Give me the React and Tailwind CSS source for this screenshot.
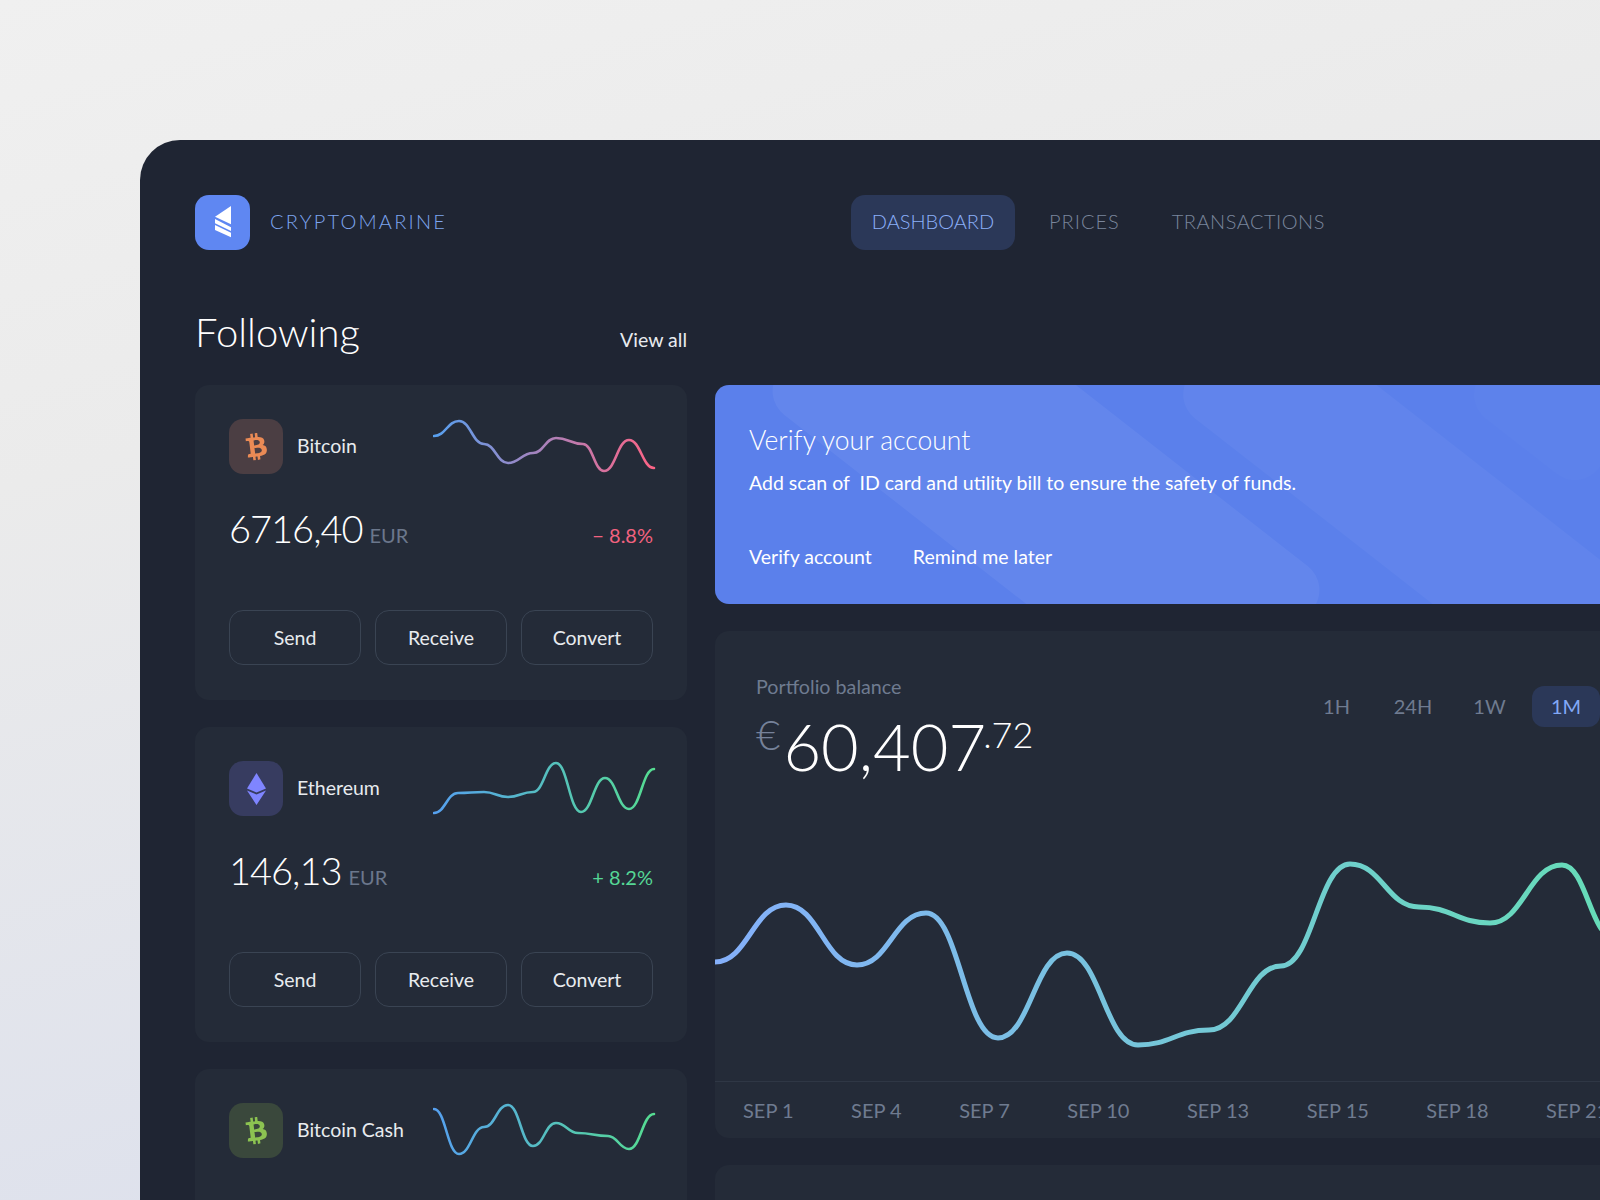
import { FaBtc } from "react-icons/fa";

function smooth(pts) {
  let d = `M${pts[0][0]} ${pts[0][1]}`;
  for (let i = 1; i < pts.length; i++) {
    const [x0, y0] = pts[i - 1];
    const [x1, y1] = pts[i];
    const k = (x1 - x0) * 0.46;
    d += ` C${x0 + k} ${y0} ${x1 - k} ${y1} ${x1} ${y1}`;
  }
  return d;
}

const coins = [
  {
    name: "Bitcoin",
    value: "6716,40",
    change: "− 8.8%",
    changeCls: "text-[#f2627f]",
    iconBg: "bg-[#4b3e43]",
    icon: <FaBtc className="text-[#ea8a55] text-[27px] -rotate-[7deg]" />,
    from: "#56a0f0",
    to: "#ff6384",
    pts: [[1, 21], [26, 6], [51, 29], [75, 48], [100, 38], [123, 23], [150, 29], [171, 56], [196, 25], [221, 53]],
  },
  {
    name: "Ethereum",
    value: "146,13",
    change: "+ 8.2%",
    changeCls: "text-[#55d695]",
    iconBg: "bg-[#373c60]",
    icon: (
      <svg width="19" height="32" viewBox="0 0 19 32">
        <path d="M9.5 0 L19 15.5 L9.5 19.5 L0 15.5 Z" fill="#7f85ff" />
        <path d="M0 17.5 L9.5 21.5 L19 17.5 L9.5 32 Z" fill="#7f85ff" />
      </svg>
    ),
    from: "#56a0f0",
    to: "#55dd90",
    pts: [[1, 56], [25, 36], [51, 35], [75, 40], [100, 35], [123, 6], [148, 55], [172, 21], [196, 52], [221, 12]],
  },
  {
    name: "Bitcoin Cash",
    value: "1946,10",
    change: "+ 2.1%",
    changeCls: "text-[#55d695]",
    iconBg: "bg-[#3a483c]",
    icon: <FaBtc className="text-[#8cc351] text-[27px] -rotate-[7deg]" />,
    from: "#56a0f0",
    to: "#55dd90",
    pts: [[1, 10], [26, 55], [51, 28], [75, 6], [100, 47], [123, 24], [145, 34], [175, 37], [196, 50], [221, 15]],
  },
];

function Spark({ id, pts, from, to }) {
  return (
    <svg width="224" height="60" viewBox="0 0 224 60" fill="none" className="shrink-0">
      <defs>
        <linearGradient id={id} gradientUnits="userSpaceOnUse" x1="0" y1="0" x2="224" y2="0">
          <stop offset="0" stopColor={from} />
          <stop offset="1" stopColor={to} />
        </linearGradient>
      </defs>
      <path d={smooth(pts)} stroke={`url(#${id})`} strokeWidth="2.6" strokeLinecap="round" />
    </svg>
  );
}

function CoinCard({ coin, idx }) {
  return (
    <div className="h-[315px] shrink-0 rounded-[14px] bg-[#242b38] px-[34px] pt-[34px]">
      <div className="flex items-center h-[55px]">
        <div className={`w-[54px] h-[55px] rounded-[14px] flex items-center justify-center shrink-0 ${coin.iconBg}`}>
          {coin.icon}
        </div>
        <span className="ml-[14px] pb-[1px] text-[19.5px] text-[#e8ebef]">{coin.name}</span>
        <div className="ml-auto mr-[-4px] mb-[4px]">
          <Spark id={`spark${idx}`} pts={coin.pts} from={coin.from} to={coin.to} />
        </div>
      </div>
      <div className="flex items-baseline mt-[26px] h-[50px]">
        <span className="text-[38px] tracking-[-1px] font-light text-white">{coin.value}</span>
        <span className="ml-[7px] text-[20px] text-[#6b778c]">EUR</span>
        <span className={`ml-auto text-[20px] ${coin.changeCls}`}>{coin.change}</span>
      </div>
      <div className="flex gap-[14px] mt-[60px]">
        {["Send", "Receive", "Convert"].map((b) => (
          <button key={b} className="flex-1 h-[55px] rounded-[14px] border border-[#3a4453] text-[19.5px] text-[#e8ebef]">
            {b}
          </button>
        ))}
      </div>
    </div>
  );
}

const chartPts = [[0, 106], [71, 49], [142, 109], [211, 57], [283, 182], [352, 97], [423, 189], [494, 174], [566, 110], [635, 8], [704, 51], [775, 67], [847, 9], [900, 82]];
const days = ["SEP 1", "SEP 4", "SEP 7", "SEP 10", "SEP 13", "SEP 15", "SEP 18", "SEP 21"];

export default function App() {
  return (
    <div className="w-[1600px] h-[1200px] overflow-hidden bg-[linear-gradient(165deg,#f0f0f0_0%,#ebebeb_30%,#d8dded_100%)] pt-[140px] pl-[140px] font-['Lato',sans-serif]">
      <div className="w-[1500px] h-[1100px] rounded-tl-[40px] bg-[#1f2533] pl-[55px] pt-[55px]">
        <header className="flex items-center h-[55px]">
          <div className="w-[55px] h-[55px] rounded-[14px] bg-[#5f87f2] flex items-center justify-center">
            <svg width="16" height="32" viewBox="0 0 16 32" fill="#fff" className="mb-[2px]">
              <path d="M16 0 L0 10.7 L16 18.3 Z" />
              <path d="M0 13 L16 21.3 V25 L0 17.3 Z" />
              <path d="M0 19 L16 26.7 V31.3 L0 24 Z" />
            </svg>
          </div>
          <span className="ml-5 pb-[3px] w-[180px] text-[20px] font-light leading-none tracking-[2.2px] text-[#7ea5f0]">CRYPTOMARINE</span>
          <nav className="ml-[401px] flex items-center text-[20px] font-light">
            <a className="h-[55px] w-[164px] pb-[3px] rounded-[14px] bg-[#2b3858] flex items-center justify-center text-[#8cb0fa]">DASHBOARD</a>
            <a className="ml-[34px] pb-[3px] text-[#7a869c] tracking-[1px]">PRICES</a>
            <a className="ml-[52px] pb-[3px] text-[#7a869c] tracking-[0.5px]">TRANSACTIONS</a>
          </nav>
        </header>

        <div className="flex gap-[28px] mt-[50px]">
          <div className="w-[492px] shrink-0">
            <div className="flex items-baseline justify-between h-[85px] pt-[2px]">
              <h1 className="text-[40px] font-light text-white">Following</h1>
              <a className="text-[19.5px] text-[#e8ebef]">View all</a>
            </div>
            <div className="flex flex-col gap-[27px]">
              {coins.map((c, i) => <CoinCard key={c.name} coin={c} idx={i} />)}
            </div>
          </div>

          <div className="flex-1 min-w-0 pt-[85px] flex flex-col gap-[27px]">
            <div className="relative h-[219px] shrink-0 overflow-hidden rounded-[14px] bg-[#5b80eb] pl-[34px] pt-[37px] text-white">
              <div className="absolute left-[48px] top-[4px] w-[566px] h-[203px] rounded-[30px] bg-white/[0.05] rotate-[38deg]" />
              <div className="absolute left-[435px] top-[76px] w-[600px] h-[138px] rounded-[30px] bg-white/[0.035] rotate-[38deg]" />
              <div className="absolute left-[774px] top-[-64px] w-[150px] h-[140px] rounded-[30px] bg-white/[0.015] rotate-[38deg]" />
              <div className="relative">
                <h2 className="text-[26.5px] font-light leading-[36px]">Verify your account</h2>
                <p className="mt-[11px] text-[19.5px] leading-[28px]">Add scan of&nbsp; ID card and utility bill to ensure the safety of funds.</p>
                <div className="mt-[46px] flex gap-[41px] text-[19.5px] leading-[28px]">
                  <a>Verify account</a>
                  <a>Remind me later</a>
                </div>
              </div>
            </div>

            <div className="h-[507px] shrink-0 rounded-[14px] bg-[#242b38] flex flex-col overflow-hidden">
              <div className="flex justify-between h-[225px] pl-[41px] pr-[40px] pt-[42px]">
                <div>
                  <div className="text-[19.7px] leading-[28px] text-[#6f7b90]">Portfolio balance</div>
                  <div className="flex items-start mt-[7px] text-white font-light">
                    <span className="text-[42px] text-[#76829a] leading-[52px] mr-[3px]">€</span>
                    <span className="text-[65px] leading-[76px]">60,407</span>
                    <span className="text-[36px] leading-[52px] ml-[-3px]">.72</span>
                  </div>
                </div>
                <div className="flex items-center h-[41px] mt-[13px] gap-[8.5px] text-[20px] text-[#6f7b90]">
                  <span className="w-[68px] pb-[2px] text-center">1H</span>
                  <span className="w-[68px] pb-[2px] text-center">24H</span>
                  <span className="w-[68px] pb-[2px] text-center">1W</span>
                  <span className="w-[68px] h-[41px] pb-[2px] rounded-[12px] bg-[#2b3858] text-[#82a8f6] flex items-center justify-center">1M</span>
                </div>
              </div>
              <svg width="885" height="225" viewBox="0 0 885 225" fill="none" className="shrink-0">
                <defs>
                  <linearGradient id="balance" gradientUnits="userSpaceOnUse" x1="0" y1="0" x2="885" y2="0">
                    <stop offset="0" stopColor="#85b0fb" />
                    <stop offset="1" stopColor="#66dcb8" />
                  </linearGradient>
                </defs>
                <path d={smooth(chartPts)} stroke="url(#balance)" strokeWidth="5" strokeLinecap="round" />
              </svg>
              <div className="border-t border-[#2f3745] flex gap-[57.5px] pl-[28px] pt-[13px] text-[20px] text-[#6f7b90] whitespace-nowrap">
                {days.map((d) => <span key={d}>{d}</span>)}
              </div>
            </div>

            <div className="h-[120px] shrink-0 rounded-[14px] bg-[#242b38]" />
          </div>
        </div>
      </div>
    </div>
  );
}
